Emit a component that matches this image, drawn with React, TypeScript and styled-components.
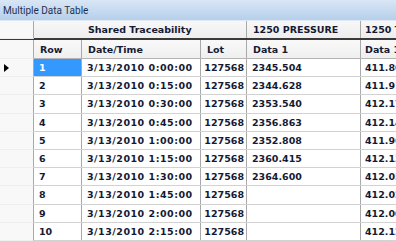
import styled, { createGlobalStyle } from 'styled-components';

const GlobalStyle = createGlobalStyle`
  html, body {
    margin: 0;
    padding: 0;
    background: #ffffff;
  }
`;

const COLUMNS = '34px 48px 119px 46px 114px 80px';

type Row = {
  row: number;
  time: string;
  lot: string;
  data1: string;
  data2: string;
};

const rows: Row[] = [
  { row: 1, time: '3/13/2010 0:00:00', lot: '127568', data1: '2345.504', data2: '411.80' },
  { row: 2, time: '3/13/2010 0:15:00', lot: '127568', data1: '2344.628', data2: '411.91' },
  { row: 3, time: '3/13/2010 0:30:00', lot: '127568', data1: '2353.540', data2: '412.17' },
  { row: 4, time: '3/13/2010 0:45:00', lot: '127568', data1: '2356.863', data2: '412.14' },
  { row: 5, time: '3/13/2010 1:00:00', lot: '127568', data1: '2352.808', data2: '411.96' },
  { row: 6, time: '3/13/2010 1:15:00', lot: '127568', data1: '2360.415', data2: '412.13' },
  { row: 7, time: '3/13/2010 1:30:00', lot: '127568', data1: '2364.600', data2: '412.05' },
  { row: 8, time: '3/13/2010 1:45:00', lot: '127568', data1: '', data2: '412.02' },
  { row: 9, time: '3/13/2010 2:00:00', lot: '127568', data1: '', data2: '412.00' },
  { row: 10, time: '3/13/2010 2:15:00', lot: '127568', data1: '', data2: '412.12' },
];

export default function App() {
  return (
    <>
      <GlobalStyle />
      <Window>
        <TitleBar>Multiple Data Table</TitleBar>
        <Grid>
          <GroupRow>
            <RowHeaderCell />
            <HeaderCell $noBorder />
            <HeaderCell $span={2}>Shared Traceability</HeaderCell>
            <HeaderCell>1250 PRESSURE</HeaderCell>
            <HeaderCell $pad={4}>1250 TEMPERATURE</HeaderCell>
          </GroupRow>
          <ColumnRow>
            <RowHeaderCell />
            <HeaderCell>Row</HeaderCell>
            <HeaderCell>Date/Time</HeaderCell>
            <HeaderCell>Lot</HeaderCell>
            <HeaderCell>Data 1</HeaderCell>
            <HeaderCell $pad={4}>Data 1</HeaderCell>
          </ColumnRow>
          {rows.map((r) => (
            <DataRow key={r.row}>
              <RowHeaderCell>
                {r.row === 1 && (
                  <svg width="5" height="8" viewBox="0 0 5 8">
                    <polygon points="0,0 5,4 0,8" fill="#000" />
                  </svg>
                )}
              </RowHeaderCell>
              <Cell $selected={r.row === 1}>{r.row}</Cell>
              <Cell $wide>{r.time}</Cell>
              <Cell $align="right">{r.lot}</Cell>
              <Cell>{r.data1}</Cell>
              <Cell $pad={4}>{r.data2}</Cell>
            </DataRow>
          ))}
        </Grid>
      </Window>
    </>
  );
}

const Window = styled.div`
  width: 396px;
  height: 241px;
  overflow: hidden;
  background: #ffffff;
`;

const TitleBar = styled.div`
  height: 21px;
  box-sizing: border-box;
  padding: 1px 3px 0;
  display: flex;
  align-items: center;
  background: linear-gradient(#d9e6f5, #b6cfeb);
  border-bottom: 1px solid #dfe8f3;
  font-family: Roboto, 'Liberation Sans', sans-serif;
  font-size: 10px;
  color: #1e3250;
  white-space: nowrap;
`;

const Grid = styled.div`
  width: 441px;
  font-family: 'DejaVu Sans', Verdana, sans-serif;
  font-weight: bold;
  font-size: 9.5px;
  color: #141a33;
`;

const GroupRow = styled.div`
  display: grid;
  grid-template-columns: ${COLUMNS};
  height: 17px;
  background: linear-gradient(#f7f7f7, #eeeeee);
  border-bottom: 2px solid #3a3a3a;
`;

const ColumnRow = styled.div`
  display: grid;
  grid-template-columns: ${COLUMNS};
  height: 18px;
  background: linear-gradient(#f9f9f9, #efefef);
  border-bottom: 1px solid #b4b4b4;
`;

const DataRow = styled.div`
  display: grid;
  grid-template-columns: ${COLUMNS};
  height: 18.2px;
  box-sizing: border-box;
  border-bottom: 1px solid #d2d2d2;
`;

const RowHeaderCell = styled.div`
  display: flex;
  align-items: center;
  padding-left: 4px;
  background: #f8f8f8;
  border-right: 1px solid #a9a9a9;
  margin-bottom: -1px;
  border-bottom: 1px solid #eeeeee;
`;

const HeaderCell = styled.div<{ $span?: number; $noBorder?: boolean; $pad?: number }>`
  grid-column: span ${({ $span }) => $span ?? 1};
  display: flex;
  align-items: center;
  padding-left: ${({ $pad }) => $pad ?? 6}px;
  white-space: nowrap;
  overflow: hidden;
  border-right: 1px solid ${({ $noBorder }) => ($noBorder ? 'transparent' : '#a9a9a9')};
`;

const Cell = styled.div<{
  $selected?: boolean;
  $align?: 'left' | 'right';
  $wide?: boolean;
  $pad?: number;
}>`
  display: flex;
  align-items: center;
  justify-content: ${({ $align }) => ($align === 'right' ? 'flex-end' : 'flex-start')};
  padding-left: ${({ $align, $pad }) => ($align === 'right' ? 0 : $pad ?? 5)}px;
  padding-right: ${({ $align }) => ($align === 'right' ? 2 : 0)}px;
  letter-spacing: ${({ $wide }) => ($wide ? '0.5px' : 'normal')};
  white-space: nowrap;
  overflow: hidden;
  border-right: 1px solid #a9a9a9;
  background: ${({ $selected }) => ($selected ? '#3399ff' : 'transparent')};
  color: ${({ $selected }) => ($selected ? '#ffffff' : 'inherit')};
`;
